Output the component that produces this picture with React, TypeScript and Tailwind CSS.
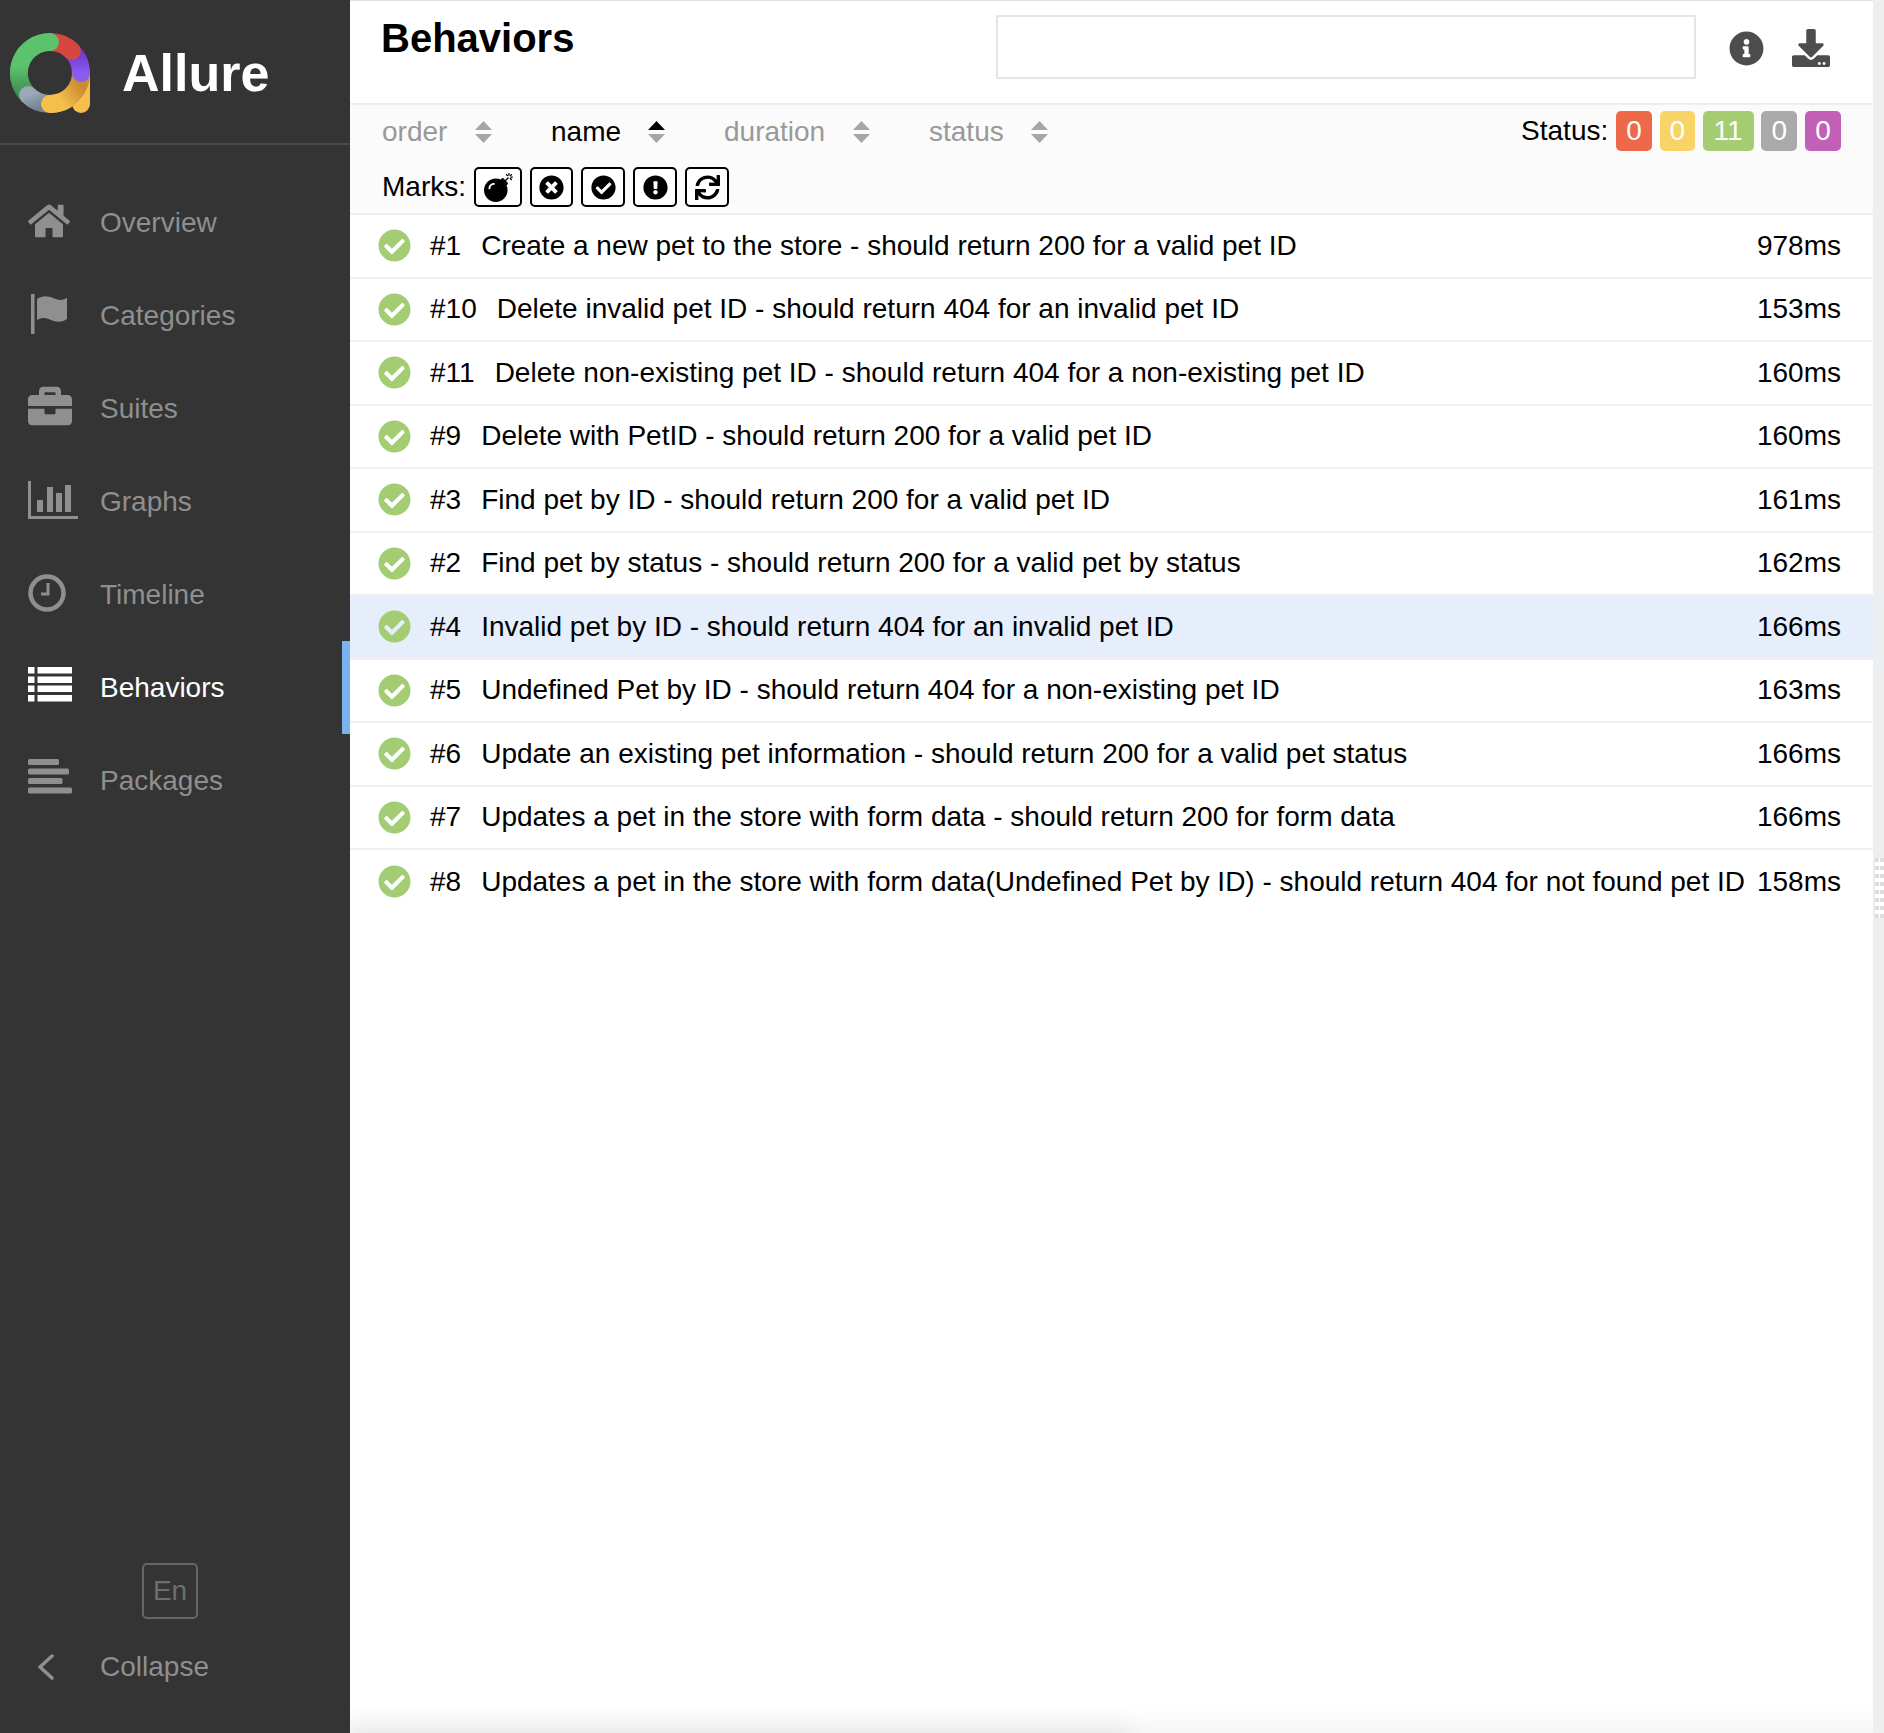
import { FaBomb, FaBriefcase, FaCheckCircle, FaDownload, FaExclamationCircle, FaHome, FaInfoCircle, FaSync, FaTimesCircle } from "react-icons/fa"
import type { ReactNode } from "react"

const FlagIcon = () => (
    <svg width="44" height="40" viewBox="0 0 44 40" fill="currentColor">
        <rect x="3" y="0" width="3.5" height="40" />
        <path d="M9 5c6-4 11-3 16-1s8 3 14 0v21c-6 4-11 3-16 1s-8-3-14 0z" />
    </svg>
)

const GraphIcon = () => (
    <svg width="50" height="38" viewBox="0 0 50 38" fill="currentColor">
        <rect x="0" y="0" width="3" height="38" />
        <rect x="0" y="35" width="50" height="3" />
        <rect x="9" y="19" width="6" height="12" />
        <rect x="19" y="6" width="6" height="25" />
        <rect x="28" y="12" width="6" height="19" />
        <rect x="37" y="4" width="6" height="27" />
    </svg>
)

const ClockIcon = () => (
    <svg width="38" height="38" viewBox="0 0 38 38" fill="none" stroke="currentColor">
        <circle cx="19" cy="19" r="16.5" strokeWidth="4.5" />
        <path d="M20 9v11h-7" strokeWidth="3" />
    </svg>
)

const ListIcon = () => (
    <svg width="44" height="35" viewBox="0 0 44 35" fill="currentColor">
        {[0, 9.5, 18.5, 28].map((y) => (
            <g key={y}>
                <rect x="0" y={y} width="6.5" height="6.5" />
                <rect x="9.5" y={y} width="34.5" height="6.5" />
            </g>
        ))}
    </svg>
)

const PackagesIcon = () => (
    <svg width="44" height="35" viewBox="0 0 44 35" fill="currentColor">
        <rect x="0" y="0" width="31" height="6" rx="1.5" />
        <rect x="0" y="9.5" width="41" height="6" rx="1.5" />
        <rect x="0" y="19" width="34.5" height="6" rx="1.5" />
        <rect x="0" y="28.5" width="44" height="6" rx="1.5" />
    </svg>
)

const Logo = () => (
    <svg width="80" height="80" viewBox="10 33 80 80" fill="none" strokeWidth="18" strokeLinecap="round">
        <defs>
            <linearGradient id="green" x1="0" y1="0" x2="0" y2="1">
                <stop offset="0.45" stopColor="#5cc26c" />
                <stop offset="1" stopColor="#3f8a52" />
            </linearGradient>
            <linearGradient id="purple" x1="0" y1="0" x2="0" y2="1">
                <stop offset="0" stopColor="#6f35c9" />
                <stop offset="1" stopColor="#8b5cf0" />
            </linearGradient>
            <linearGradient id="gray" x1="0" y1="0" x2="1" y2="1">
                <stop offset="0" stopColor="#9aa8b8" />
                <stop offset="1" stopColor="#75808f" />
            </linearGradient>
            <linearGradient id="amber" gradientUnits="userSpaceOnUse" x1="50" y1="104" x2="80" y2="84">
                <stop offset="0.3" stopColor="#f5bf4b" />
                <stop offset="1" stopColor="#c98b34" />
            </linearGradient>
        </defs>
        <path d="M81 73V104" stroke="#f5bf4b" />
        <path d="M81 73A31 31 0 0 1 50 104" stroke="url(#amber)" strokeLinecap="butt" />
        <path d="M71.9 51A31 31 0 0 1 81 73" stroke="url(#purple)" />
        <path d="M50 42A31 31 0 0 1 71.9 51" stroke="#d5473f" />
        <path d="M28 95A31 31 0 0 1 50 42" stroke="url(#green)" />
        <path d="M28 95A31 31 0 0 0 50 104" stroke="url(#gray)" />
        <path d="M50 104A31 31 0 0 0 66 100" stroke="url(#amber)" />
    </svg>
)

const SortIcon = ({ active }: { active?: boolean }) => (
    <svg width="17" height="22" viewBox="0 0 17 22" className="ml-auto">
        <path d="M8.5 0L17 9H0z" fill={active ? "#000000" : "#a6a6a6"} />
        <path d="M8.5 22L0 13H17z" fill="#a6a6a6" />
    </svg>
)

// lift: the icons sit a little above the label's centre line
const navItems: { label: string; icon: ReactNode; lift: string; active?: boolean }[] = [
    { label: "Overview", icon: <FaHome size={42} />, lift: "pb-[4px]" },
    { label: "Categories", icon: <FlagIcon />, lift: "pb-[3px]" },
    { label: "Suites", icon: <FaBriefcase size={44} />, lift: "pb-[6px]" },
    { label: "Graphs", icon: <GraphIcon />, lift: "pb-[3px]" },
    { label: "Timeline", icon: <ClockIcon />, lift: "pb-[3px]" },
    { label: "Behaviors", icon: <ListIcon />, lift: "pb-[7px]" },
    { label: "Packages", icon: <PackagesIcon />, lift: "pb-[8px]" },
]

const sorters = [
    { label: "order", width: "w-[169px]", iconWidth: "w-[110px]" },
    { label: "name", width: "w-[173px]", iconWidth: "w-[114px]", active: true },
    { label: "duration", width: "w-[205px]", iconWidth: "w-[146px]" },
    { label: "status", width: "w-[120px]", iconWidth: "w-[119px]" },
]

const statuses = [
    { value: "0", color: "bg-[#ed694a]", width: "w-[36px]" },
    { value: "0", color: "bg-[#f8d366]", width: "w-[35px]" },
    { value: "11", color: "bg-[#a3cc73]", width: "w-[51px]" },
    { value: "0", color: "bg-[#aaaaaa]", width: "w-[36px]" },
    { value: "0", color: "bg-[#c260b8]", width: "w-[36px]" },
]

const marks = [
    { icon: <FaBomb size={29} />, width: "w-[48px]" },
    { icon: <FaTimesCircle size={25} />, width: "w-[43px]" },
    { icon: <FaCheckCircle size={25} />, width: "w-[44px]" },
    { icon: <FaExclamationCircle size={25} />, width: "w-[44px]" },
    { icon: <FaSync size={25} />, width: "w-[44px]" },
]

const rows = [
    { order: "#1", name: "Create a new pet to the store - should return 200 for a valid pet ID", time: "978ms" },
    { order: "#10", name: "Delete invalid pet ID - should return 404 for an invalid pet ID", time: "153ms" },
    { order: "#11", name: "Delete non-existing pet ID - should return 404 for a non-existing pet ID", time: "160ms" },
    { order: "#9", name: "Delete with PetID - should return 200 for a valid pet ID", time: "160ms" },
    { order: "#3", name: "Find pet by ID - should return 200 for a valid pet ID", time: "161ms" },
    { order: "#2", name: "Find pet by status - should return 200 for a valid pet by status", time: "162ms" },
    { order: "#4", name: "Invalid pet by ID - should return 404 for an invalid pet ID", time: "166ms", selected: true },
    { order: "#5", name: "Undefined Pet by ID - should return 404 for a non-existing pet ID", time: "163ms" },
    { order: "#6", name: "Update an existing pet information - should return 200 for a valid pet status", time: "166ms" },
    { order: "#7", name: "Updates a pet in the store with form data - should return 200 for form data", time: "166ms" },
    { order: "#8", name: "Updates a pet in the store with form data(Undefined Pet by ID) - should return 404 for not found pet ID", time: "158ms" },
]

const Sidebar = () => (
    <aside className="relative z-10 flex flex-col w-[350px] shrink-0 bg-[#343434] text-[#8f8f8f]">
        <div className="flex items-center h-[145px] border-b-2 border-[#484848] pl-[10px] pt-[3px]">
            <Logo />
            <span className="ml-[32px] text-[52px] font-bold text-white leading-none">Allure</span>
        </div>
        <nav className="flex flex-col mt-[31px]">
            {navItems.map((item) => (
                <div key={item.label} className={`relative flex items-center h-[93px] ${item.label === "Behaviors" ? "text-white" : ""}`}>
                    <span className={`flex items-center w-[100px] pl-[28px] ${item.lift}`}>{item.icon}</span>
                    <span className="text-[28px] leading-none">{item.label}</span>
                    {item.label === "Behaviors" && <span className="absolute right-0 top-0 w-[8px] h-full bg-[#7ab2ee]" />}
                </div>
            ))}
        </nav>
        <div className="flex flex-col mt-auto pb-[42px]">
            <div className="flex items-center justify-center self-start ml-[142px] w-[56px] h-[56px] border-2 border-[#666666] rounded-[5px] text-[28px] text-[#6e6e6e]">
                En
            </div>
            <div className="flex items-center h-[48px] mt-[24px]">
                <svg width="100" height="26" viewBox="0 0 100 26" fill="none" stroke="currentColor" strokeWidth="3.5" strokeLinecap="round" strokeLinejoin="round">
                    <path d="M52 2L40 13l12 11" />
                </svg>
                <span className="text-[28px] leading-none">Collapse</span>
            </div>
        </div>
    </aside>
)

const App = () => {
    return (
        <div className="relative flex w-[1884px] h-[1733px] overflow-hidden bg-white text-black font-['Liberation_Sans',Arial,sans-serif]">
            <Sidebar />
            <main className="flex flex-col flex-1 min-w-0 border-t border-[#e2e2e2]">
                <header className="flex items-start h-[104px] shrink-0 border-b-2 border-[#eeeeee]">
                    <h2 className="ml-[31px] mt-[14px] text-[40px] leading-[46px] font-bold">Behaviors</h2>
                    <div className="ml-[422px] mt-[14px] w-[700px] h-[64px] border-2 border-[#e5e5e5]" />
                    <FaInfoCircle size={35} className="ml-[33px] mt-[30px] text-[#4d4d4d]" />
                    <FaDownload size={38} className="ml-[28px] mt-[28px] text-[#4d4d4d]" />
                </header>

                <div className="h-[110px] shrink-0 bg-[#fbfbfb] px-[32px] border-b-2 border-[#eeeeee]">
                    <div className="flex items-start h-[61px]">
                        {sorters.map((sorter) => (
                            <div key={sorter.label} className={`flex items-center h-[54px] ${sorter.width} ${sorter.active ? "text-black" : "text-[#999999]"}`}>
                                <span className={`flex items-center text-[28px] ${sorter.iconWidth}`}>
                                    {sorter.label}
                                    <SortIcon active={sorter.active} />
                                </span>
                            </div>
                        ))}
                        <div className="flex items-center gap-[7.75px] ml-auto h-[52px] text-[28px]">
                            <span>Status:</span>
                            {statuses.map((status, i) => (
                                <span key={i} className={`flex items-center justify-center h-[40px] rounded-[5px] text-white ${status.color} ${status.width}`}>
                                    {status.value}
                                </span>
                            ))}
                        </div>
                    </div>
                    <div className="flex items-center gap-[8px] text-[28px]">
                        <span>Marks:</span>
                        {marks.map((mark, i) => (
                            <span key={i} className={`flex items-center justify-center h-[40px] border-2 border-black rounded-[5px] bg-white ${mark.width}`}>
                                {mark.icon}
                            </span>
                        ))}
                    </div>
                </div>

                <div className="flex flex-col">
                    {rows.map((row, i) => (
                        <div
                            key={row.order}
                            className={`flex items-center h-[63.5px] pl-[28px] pr-[32px] text-[28px] ${i < rows.length - 1 ? "border-b-2 border-[#f0f0f0]" : ""} ${row.selected ? "bg-[#e6edfb]" : ""}`}
                        >
                            <FaCheckCircle size={33} className="shrink-0 text-[#a3cc73]" />
                            <span className="ml-[19px] mr-[20px]">{row.order}</span>
                            <span>{row.name}</span>
                            <span className="ml-auto">{row.time}</span>
                        </div>
                    ))}
                </div>
            </main>
            <div className="w-[11px] shrink-0 bg-[#eceef0]" />

            {/* bottom shadow */}
            <div className="absolute left-[350px] right-[11px] bottom-0 h-[30px] bg-gradient-to-b from-transparent to-[#f7f7f7]" />
            <div className="absolute left-[350px] bottom-[-10px] w-[780px] h-[10px] shadow-[0_0_26px_rgba(0,0,0,0.16)]" />

            {/* resize handle */}
            <div className="absolute right-0 top-[858px] grid grid-cols-2 gap-x-[1px] gap-y-[4px] w-[9px] bg-white">
                {Array.from({ length: 16 }).map((_, i) => (
                    <span key={i} className="w-[4px] h-[4px] bg-[#dddddd]" />
                ))}
            </div>
        </div>
    )
}

export default App
